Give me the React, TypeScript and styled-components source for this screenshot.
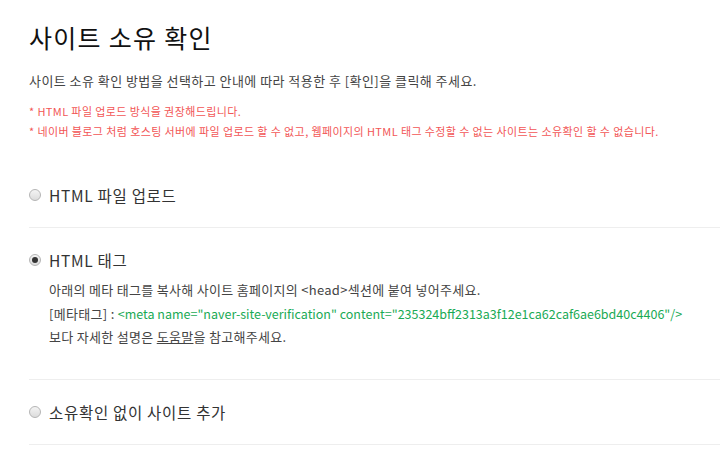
import styled, { createGlobalStyle } from "styled-components";

const GlobalStyle = createGlobalStyle`
  body {
    margin: 0;
    background: #fff;
    font-family: "Noto Sans CJK KR", "Noto Sans", sans-serif;
  }
`;

interface option {
  id: string;
  label: string;
  checked: boolean;
}

const options: option[] = [
  { id: "file", label: "HTML 파일 업로드", checked: false },
  { id: "tag", label: "HTML 태그", checked: true },
  { id: "none", label: "소유확인 없이 사이트 추가", checked: false },
];

function App(): JSX.Element {
  return (
    <Wrapper>
      <GlobalStyle />
      <Title>사이트 소유 확인</Title>
      <Lead>
        사이트 소유 확인 방법을 선택하고 안내에 따라 적용한 후 [확인]을 클릭해
        주세요.
      </Lead>
      <Notes>
        <Note>* HTML 파일 업로드 방식을 권장해드립니다.</Note>
        <Note>
          * 네이버 블로그 처럼 호스팅 서버에 파일 업로드 할 수 없고, 웹페이지의
          HTML 태그 수정할 수 없는 사이트는 소유확인 할 수 없습니다.
        </Note>
      </Notes>
      <Methods>
        {options.map((item) => (
          <Method key={item.id} open={item.checked}>
            <RadioRow>
              <Radio checked={item.checked} />
              <Label>{item.label}</Label>
            </RadioRow>
            {item.checked && (
              <Guide>
                <p>
                  아래의 메타 태그를 복사해 사이트 홈페이지의 &lt;head&gt;섹션에
                  붙여 넣어주세요.
                </p>
                <p>
                  [메타태그] :{" "}
                  <Code>
                    &lt;meta name="naver-site-verification"
                    content="235324bff2313a3f12e1ca62caf6ae6bd40c4406"/&gt;
                  </Code>
                </p>
                <p>
                  보다 자세한 설명은 <HelpLink>도움말</HelpLink>을 참고해주세요.
                </p>
              </Guide>
            )}
          </Method>
        ))}
      </Methods>
    </Wrapper>
  );
}

export default App;

const Wrapper = styled.div`
  padding: 20px 0 0 29px;
  color: #333;
  overflow: hidden;
`;

const Title = styled.h1`
  margin: 0;
  font-size: 25px;
  font-weight: 400;
  line-height: 34px;
  color: #111;
  letter-spacing: 1.3px;
`;

const Lead = styled.p`
  margin: 19px 0 0;
  font-size: 13px;
  line-height: 16px;
  color: #444;
  letter-spacing: 0.45px;
`;

const Notes = styled.ul`
  list-style: none;
  margin: 12px 0 0;
  padding: 0;
`;

const Note = styled.li`
  font-size: 11px;
  line-height: 20px;
  color: #f25656;
  letter-spacing: 0.4px;
`;

const Methods = styled.div`
  margin-top: 44px;
`;

const Method = styled.section<{ open: boolean }>`
  padding: ${(p) => (p.open ? "22px 0 30px" : "22px 0 22px")};
  border-bottom: 1px solid #eeeeee;

  &:first-child {
    padding-top: 0;
  }
`;

const RadioRow = styled.label`
  display: flex;
  align-items: center;
  height: 20px;
`;

const Radio = styled.span<{ checked: boolean }>`
  position: relative;
  box-sizing: border-box;
  width: 12px;
  height: 12px;
  border-radius: 50%;
  border: 1px solid #b5b5b5;
  background: linear-gradient(#f4f4f4, #dcdcdc);
  margin-right: 8px;

  &::after {
    content: "";
    display: ${(p) => (p.checked ? "block" : "none")};
    position: absolute;
    left: 2px;
    top: 2px;
    width: 6px;
    height: 6px;
    border-radius: 50%;
    background: #333;
  }
`;

const Label = styled.span`
  font-size: 15.5px;
  color: #333;
  letter-spacing: 0.7px;
`;

const Guide = styled.div`
  padding: 8px 0 0 20px;
  font-size: 13px;
  color: #444;
  letter-spacing: 0.3px;

  p {
    margin: 0;
    line-height: 23.5px;
  }
`;

const Code = styled.span`
  color: #1aaa55;
  font-size: 12.5px;
  letter-spacing: 0;
`;

const HelpLink = styled.a`
  color: #444;
  text-decoration: underline;
  cursor: pointer;
`;
